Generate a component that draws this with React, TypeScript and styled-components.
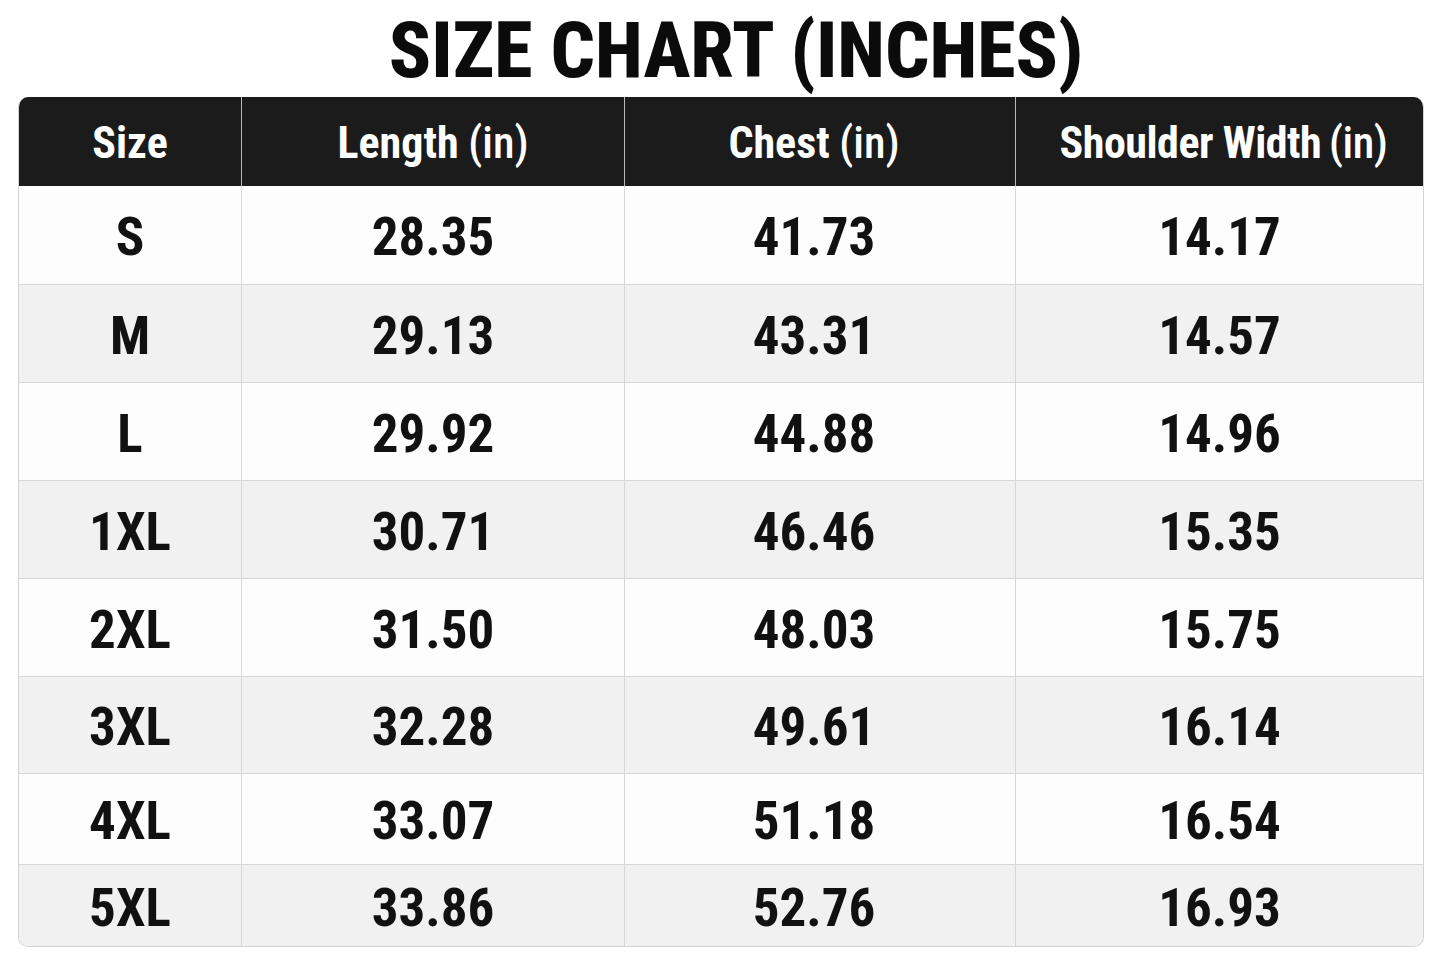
import React from "react";
import styled, { createGlobalStyle } from "styled-components";

const GlobalStyle = createGlobalStyle`
  html, body { margin: 0; padding: 0; background: #ffffff; }
  body { font-family: Roboto, "Liberation Sans", sans-serif; font-stretch: condensed; }
`;

const Page = styled.div`
  width: 1445px;
  height: 963px;
  box-sizing: border-box;
  padding: 0 21px 0 18px;
  display: flex;
  flex-direction: column;
  background: #ffffff;
`;

const Title = styled.h1`
  margin: 0;
  height: 97px;
  display: flex;
  align-items: center;
  justify-content: center;
  padding-left: 30px;
  padding-top: 4px;
  box-sizing: border-box;
  font-family: "Roboto Condensed", Roboto, sans-serif;
  font-stretch: condensed;
  font-weight: 800;
  font-size: 78px;
  line-height: 1;
  color: #0b0b0b;
`;

const Table = styled.div`
  border: 1px solid #d3d3d3;
  border-top: none;
  border-radius: 10px;
  overflow: hidden;
  display: flex;
  flex-direction: column;
`;

const cols = "222px 383px 391px 1fr";

const HeadRow = styled.div`
  display: grid;
  grid-template-columns: ${cols};
  height: 89px;
  background: #1b1b1b;
`;

const HeadCell = styled.div<{ $shift?: number; $tight?: boolean }>`
  display: flex;
  align-items: center;
  justify-content: center;
  gap: ${(p) => (p.$tight ? "0.18em" : "0.22em")};
  border-left: 1px solid #b9b9b9;
  &:first-child { border-left: none; }
  font-family: "Roboto Condensed", Roboto, sans-serif;
  font-stretch: condensed;
  font-weight: 700;
  font-size: 44px;
  letter-spacing: ${(p) => (p.$tight ? "-0.5px" : "0")};
  color: #ffffff;
  padding-top: 2px;
  padding-right: ${(p) => Math.max(p.$shift || 0, 0)}px;
  padding-left: ${(p) => Math.max(-(p.$shift || 0), 0)}px;
`;

const Unit = styled.span`
  font-weight: 500;
`;

const Row = styled.div<{ $alt: boolean; $h: number }>`
  display: grid;
  grid-template-columns: ${cols};
  height: ${(p) => p.$h}px;
  box-sizing: border-box;
  border-top: 1px solid #d7d7d7;
  background: ${(p) => (p.$alt ? "#f1f1f1" : "#fdfdfd")};
  &:first-of-type { border-top: none; }
`;

const Cell = styled.div<{ $shift?: number }>`
  display: flex;
  align-items: center;
  justify-content: center;
  border-left: 1px solid #d7d7d7;
  &:first-child { border-left: none; }
  font-family: "Roboto Condensed", Roboto, sans-serif;
  font-stretch: condensed;
  font-weight: 700;
  font-size: 53px;
  color: #111111;
  padding-top: 4px;
  padding-right: ${(p) => p.$shift || 0}px;
`;

const Body = styled.div`
  display: flex;
  flex-direction: column;
`;

const headers: [string, string | null, number, boolean][] = [
  ["Size", null, 0, false],
  ["Length", "(in)", 0, false],
  ["Chest", "(in)", 12, false],
  ["Shoulder Width", "(in)", -8, true],
];
const shifts = [0, 0, 12, 0];
const rows: [string, string, string, string, number][] = [
  ["S", "28.35", "41.73", "14.17", 98],
  ["M", "29.13", "43.31", "14.57", 98],
  ["L", "29.92", "44.88", "14.96", 98],
  ["1XL", "30.71", "46.46", "15.35", 98],
  ["2XL", "31.50", "48.03", "15.75", 98],
  ["3XL", "32.28", "49.61", "16.14", 97],
  ["4XL", "33.07", "51.18", "16.54", 91],
  ["5XL", "33.86", "52.76", "16.93", 82],
];

export default function App() {
  return (
    <>
      <GlobalStyle />
      <Page>
        <Title>SIZE CHART (INCHES)</Title>
        <Table>
          <HeadRow>
            {headers.map(([label, unit, shift, tight]) => (
              <HeadCell key={label} $shift={shift} $tight={tight}>
                <span>{label}</span>
                {unit && <Unit>{unit}</Unit>}
              </HeadCell>
            ))}
          </HeadRow>
          <Body>
            {rows.map((r, i) => (
              <Row key={r[0]} $alt={i % 2 === 1} $h={r[4]}>
                {[r[0], r[1], r[2], r[3]].map((v, j) => (
                  <Cell key={j} $shift={shifts[j]}>
                    {v}
                  </Cell>
                ))}
              </Row>
            ))}
          </Body>
        </Table>
      </Page>
    </>
  );
}
